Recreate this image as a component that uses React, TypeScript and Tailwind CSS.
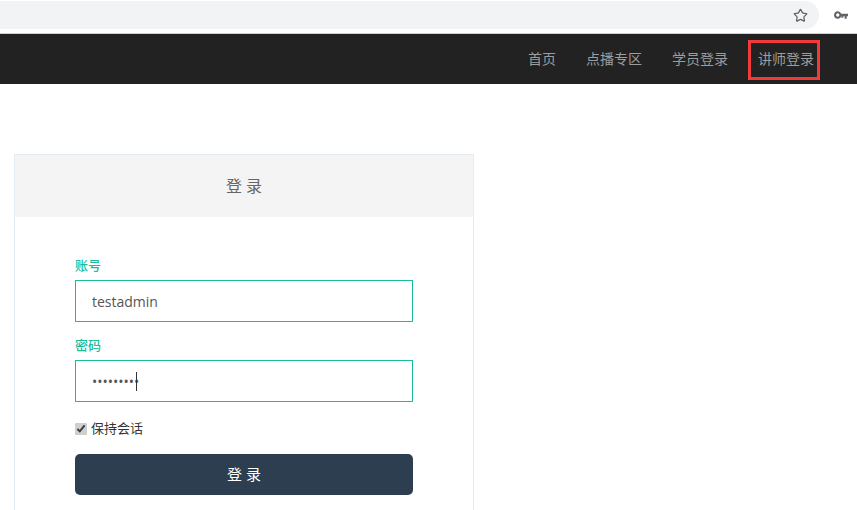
import { Star } from "lucide-react";

const navItems = ["首页", "点播专区", "学员登录", "讲师登录"];
const fontStack = { fontFamily: '"Open Sans", "Noto Sans CJK SC", sans-serif' };

function BrowserBar() {
  return (
    <div className="flex h-[34px] items-start border-b border-[#d0d1d3] bg-white pt-px">
      <div className="flex h-[28px] w-[819px] items-center justify-end rounded-r-full bg-[#f1f3f4] pr-[11px]">
        <Star className="h-[15px] w-[15px] text-[#5f6368]" strokeWidth={2} />
      </div>
      <div className="flex h-[28px] flex-1 items-center justify-end pr-[9px]">
        <svg width="14" height="8" viewBox="0 0 15 8" className="text-[#5f6368]" fill="currentColor">
          <path fillRule="evenodd" d="M4 0a4 4 0 0 1 3.8 2.7H15V5.4h-1.4V8h-2.2V5.4H10V7H7.9V5.2A4 4 0 1 1 4 0Zm0 2.2a1.8 1.8 0 1 0 0 3.6 1.8 1.8 0 0 0 0-3.6Z" />
        </svg>
      </div>
    </div>
  );
}

function NavBar() {
  return (
    <nav className="flex h-[50px] items-center justify-end gap-[30px] bg-[#222222] pr-[43px]">
      {navItems.map((item, i) => (
        <a key={item} className="relative text-[14px] leading-5 text-[#9d9d9d]">
          {item}
          {i === navItems.length - 1 && (
            <span className="absolute -left-[10px] -top-[9px] h-[40px] w-[72px] border-[3px] border-[#f13a3a]" />
          )}
        </a>
      ))}
    </nav>
  );
}

function Field({ label, value, type, caret }: { label: string; value: string; type: string; caret?: boolean }) {
  return (
    <div className="flex flex-col">
      <label className="mb-[5px] h-[20px] text-[13px] font-medium leading-5 text-[#1abc9c]">{label}</label>
      <div className="relative">
        <input
          readOnly
          type={type}
          value={value}
          className="block h-[42px] w-[338px] border border-[#1abc9c] bg-white px-4 text-[14px] text-[#555555] outline-none"
          style={fontStack}
        />
        {caret && <span className="absolute left-[61px] top-[12px] h-[19px] w-px bg-[#333333]" />}
      </div>
    </div>
  );
}

export default function App() {
  return (
    <div className="h-[510px] w-[857px] overflow-hidden bg-white" style={fontStack}>
      <BrowserBar />
      <NavBar />
      <main className="pl-[14px] pt-[70px]">
        <div className="h-[400px] w-[460px] border border-[#e4ecf3]">
          <div className="flex h-[62px] items-center justify-center bg-[#f4f4f4] text-[16px] text-[#666666]">
            登 录
          </div>
          <form className="px-[60px] pt-[38px]">
            <div className="flex flex-col gap-[13px]">
              <Field label="账号" value="testadmin" type="text" />
              <Field label="密码" value="123456789" type="password" caret />
            </div>
            <label className="mt-[17px] flex h-[20px] items-center gap-[4px] text-[13px] text-[#333333]">
              <input type="checkbox" checked readOnly className="m-0 h-[12px] w-[12px] accent-[#cfcfcf]" />
              保持会话
            </label>
            <button
              type="button"
              className="mt-[15px] block h-[41px] w-[338px] rounded-[5px] bg-[#2c3e50] text-[15px] text-white"
            >
              登 录
            </button>
          </form>
        </div>
      </main>
    </div>
  );
}
